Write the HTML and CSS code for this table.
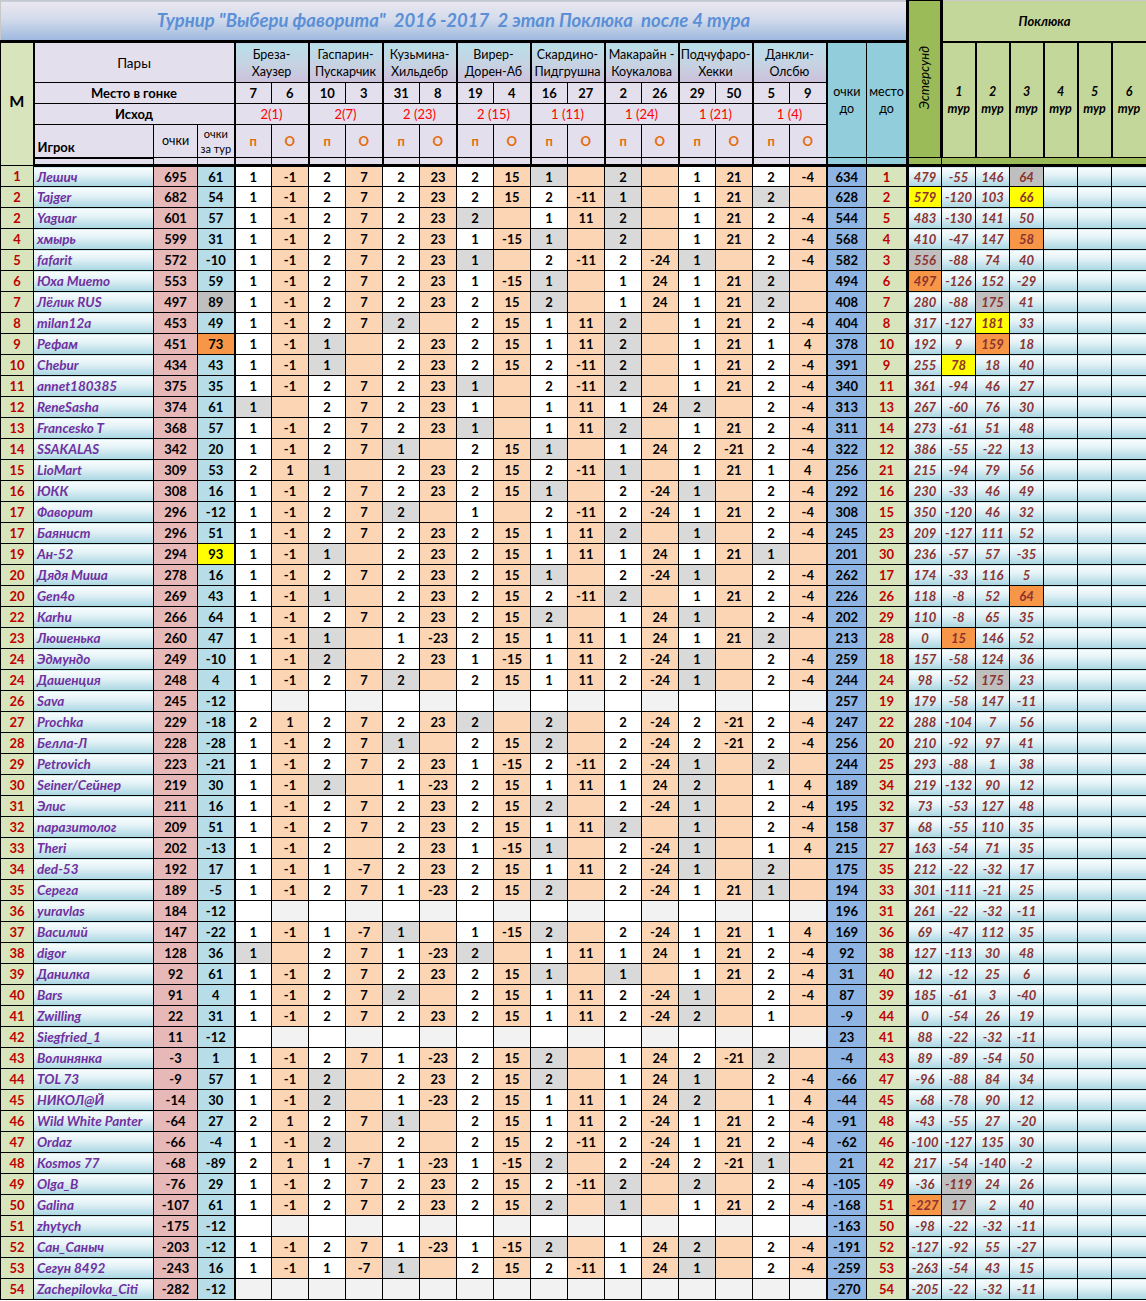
FILE: index.html
```html
<!DOCTYPE html>
<html lang="ru">
<head>
<meta charset="utf-8">
<title>Турнир "Выбери фаворита"</title>
<link rel="stylesheet" href="styles.css">
</head>
<body>
<table class="sheet">
<colgroup>
<col class="c-m"><col class="c-name"><col class="c-pts"><col class="c-tour">
<col class="c-p" span="16">
<col class="c-before"><col class="c-place"><col class="c-est"><col class="c-t" span="5"><col class="c-t6">
</colgroup>
<thead>
<tr class="h0">
<td colspan="22" class="title">Турнир "Выбери фаворита"  2016 -2017  2 этап Поклюка  после 4 тура</td>
<td rowspan="5" class="est"><span>Эстерсунд</span></td>
<td colspan="6" class="pok">Поклюка</td>
</tr>
<tr class="h1">
<td rowspan="5" class="mh">М</td>
<td colspan="3" class="lab pary">Пары</td>
<td colspan="2" class="pair l">Бреза-<br>Хаузер</td>
<td colspan="2" class="pair l">Гаспарин-<br>Пускарчик</td>
<td colspan="2" class="pair l">Кузьмина-<br>Хильдебр</td>
<td colspan="2" class="pair l">Вирер-<br>Дорен-Аб</td>
<td colspan="2" class="pair l">Скардино-<br>Пидгрушна</td>
<td colspan="2" class="pair l">Макарайн -<br>Коукалова</td>
<td colspan="2" class="pair l">Подчуфаро-<br>Хекки</td>
<td colspan="2" class="pair l">Данкли-<br>Олсбю</td>
<td rowspan="4" class="tq l">очки<br>до</td>
<td rowspan="4" class="tq r3">место<br>до</td>
<td rowspan="4" class="tr">1<br>тур</td>
<td rowspan="4" class="tr">2<br>тур</td>
<td rowspan="4" class="tr">3<br>тур</td>
<td rowspan="4" class="tr">4<br>тур</td>
<td rowspan="4" class="tr">5<br>тур</td>
<td rowspan="4" class="tr">6<br>тур</td>
</tr>
<tr class="h2">
<td colspan="3" class="lab">Место в гонке</td>
<td class="n l">7</td><td class="n">6</td>
<td class="n l">10</td><td class="n">3</td>
<td class="n l">31</td><td class="n">8</td>
<td class="n l">19</td><td class="n">4</td>
<td class="n l">16</td><td class="n">27</td>
<td class="n l">2</td><td class="n">26</td>
<td class="n l">29</td><td class="n">50</td>
<td class="n l">5</td><td class="n">9</td>
</tr>
<tr class="h3">
<td colspan="3" class="lab">Исход</td>
<td colspan="2" class="ish l">2(1)</td>
<td colspan="2" class="ish l">2(7)</td>
<td colspan="2" class="ish l">2 (23)</td>
<td colspan="2" class="ish l">2 (15)</td>
<td colspan="2" class="ish l">1 (11)</td>
<td colspan="2" class="ish l">1 (24)</td>
<td colspan="2" class="ish l">1 (21)</td>
<td colspan="2" class="ish l">1 (4)</td>
</tr>
<tr class="h4">
<td class="lab igrok">Игрок</td>
<td class="lab small">очки</td>
<td class="lab tiny">очки<br>за тур</td>
<td class="po l">п</td><td class="po">О</td>
<td class="po l">п</td><td class="po">О</td>
<td class="po l">п</td><td class="po">О</td>
<td class="po l">п</td><td class="po">О</td>
<td class="po l">п</td><td class="po">О</td>
<td class="po l">п</td><td class="po">О</td>
<td class="po l">п</td><td class="po">О</td>
<td class="po l">п</td><td class="po">О</td>
</tr>
<tr class="h5">
<td class="sp"></td><td class="sp"></td><td class="sp"></td>
<td class="sp l"></td><td class="sp"></td>
<td class="sp l"></td><td class="sp"></td>
<td class="sp l"></td><td class="sp"></td>
<td class="sp l"></td><td class="sp"></td>
<td class="sp l"></td><td class="sp"></td>
<td class="sp l"></td><td class="sp"></td>
<td class="sp l"></td><td class="sp"></td>
<td class="sp l"></td><td class="sp"></td>
<td class="sq l"></td><td class="sq r3"></td>
<td class="sg"></td><td colspan="6" class="sg"></td>
</tr>
</thead>
<tbody class="d">
<tr><td>1</td><td>Лешич</td><td>695</td><td>61</td><td>1</td><td>-1</td><td>2</td><td>7</td><td>2</td><td>23</td><td>2</td><td>15</td><td class="g">1</td><td></td><td class="g">2</td><td></td><td>1</td><td>21</td><td>2</td><td>-4</td><td>634</td><td>1</td><td>479</td><td>-55</td><td>146</td><td class="gr">64</td><td></td><td></td><td></td></tr>
<tr><td>2</td><td>Tajger</td><td>682</td><td>54</td><td>1</td><td>-1</td><td>2</td><td>7</td><td>2</td><td>23</td><td>2</td><td>15</td><td>2</td><td>-11</td><td class="g">1</td><td></td><td>1</td><td>21</td><td class="g">2</td><td></td><td>628</td><td>2</td><td class="y">579</td><td>-120</td><td>103</td><td class="y">66</td><td></td><td></td><td></td></tr>
<tr><td>2</td><td>Yaguar</td><td>601</td><td>57</td><td>1</td><td>-1</td><td>2</td><td>7</td><td>2</td><td>23</td><td class="g">2</td><td></td><td>1</td><td>11</td><td class="g">2</td><td></td><td>1</td><td>21</td><td>2</td><td>-4</td><td>544</td><td>5</td><td>483</td><td>-130</td><td>141</td><td>50</td><td></td><td></td><td></td></tr>
<tr><td>4</td><td>хмырь</td><td>599</td><td>31</td><td>1</td><td>-1</td><td>2</td><td>7</td><td>2</td><td>23</td><td>1</td><td>-15</td><td class="g">1</td><td></td><td class="g">2</td><td></td><td>1</td><td>21</td><td>2</td><td>-4</td><td>568</td><td>4</td><td>410</td><td>-47</td><td>147</td><td class="o">58</td><td></td><td></td><td></td></tr>
<tr><td>5</td><td>fafarit</td><td>572</td><td>-10</td><td>1</td><td>-1</td><td>2</td><td>7</td><td>2</td><td>23</td><td class="g">1</td><td></td><td>2</td><td>-11</td><td>2</td><td>-24</td><td class="g">1</td><td></td><td>2</td><td>-4</td><td>582</td><td>3</td><td class="gr">556</td><td>-88</td><td>74</td><td>40</td><td></td><td></td><td></td></tr>
<tr><td>6</td><td>Юха Мието</td><td>553</td><td>59</td><td>1</td><td>-1</td><td>2</td><td>7</td><td>2</td><td>23</td><td>1</td><td>-15</td><td class="g">1</td><td></td><td>1</td><td>24</td><td>1</td><td>21</td><td class="g">2</td><td></td><td>494</td><td>6</td><td class="o">497</td><td>-126</td><td>152</td><td>-29</td><td></td><td></td><td></td></tr>
<tr><td>7</td><td>Лёлик RUS</td><td>497</td><td class="gr">89</td><td>1</td><td>-1</td><td>2</td><td>7</td><td>2</td><td>23</td><td>2</td><td>15</td><td class="g">2</td><td></td><td>1</td><td>24</td><td>1</td><td>21</td><td class="g">2</td><td></td><td>408</td><td>7</td><td>280</td><td>-88</td><td class="gr">175</td><td>41</td><td></td><td></td><td></td></tr>
<tr><td>8</td><td>milan12a</td><td>453</td><td>49</td><td>1</td><td>-1</td><td>2</td><td>7</td><td class="g">2</td><td></td><td>2</td><td>15</td><td>1</td><td>11</td><td class="g">2</td><td></td><td>1</td><td>21</td><td>2</td><td>-4</td><td>404</td><td>8</td><td>317</td><td>-127</td><td class="y">181</td><td>33</td><td></td><td></td><td></td></tr>
<tr><td>9</td><td>Рефам</td><td>451</td><td class="o">73</td><td>1</td><td>-1</td><td class="g">1</td><td></td><td>2</td><td>23</td><td>2</td><td>15</td><td>1</td><td>11</td><td class="g">2</td><td></td><td>1</td><td>21</td><td>1</td><td>4</td><td>378</td><td>10</td><td>192</td><td>9</td><td class="o">159</td><td>18</td><td></td><td></td><td></td></tr>
<tr><td>10</td><td>Chebur</td><td>434</td><td>43</td><td>1</td><td>-1</td><td class="g">1</td><td></td><td>2</td><td>23</td><td>2</td><td>15</td><td>2</td><td>-11</td><td class="g">2</td><td></td><td>1</td><td>21</td><td>2</td><td>-4</td><td>391</td><td>9</td><td>255</td><td class="y">78</td><td>18</td><td>40</td><td></td><td></td><td></td></tr>
<tr><td>11</td><td>annet180385</td><td>375</td><td>35</td><td>1</td><td>-1</td><td>2</td><td>7</td><td>2</td><td>23</td><td class="g">1</td><td></td><td>2</td><td>-11</td><td class="g">2</td><td></td><td>1</td><td>21</td><td>2</td><td>-4</td><td>340</td><td>11</td><td>361</td><td>-94</td><td>46</td><td>27</td><td></td><td></td><td></td></tr>
<tr><td>12</td><td>ReneSasha</td><td>374</td><td>61</td><td class="g">1</td><td></td><td>2</td><td>7</td><td>2</td><td>23</td><td>1</td><td></td><td>1</td><td>11</td><td>1</td><td>24</td><td class="g">2</td><td></td><td>2</td><td>-4</td><td>313</td><td>13</td><td>267</td><td>-60</td><td>76</td><td>30</td><td></td><td></td><td></td></tr>
<tr><td>13</td><td>Francesko T</td><td>368</td><td>57</td><td>1</td><td>-1</td><td>2</td><td>7</td><td>2</td><td>23</td><td class="g">1</td><td></td><td>1</td><td>11</td><td class="g">2</td><td></td><td>1</td><td>21</td><td>2</td><td>-4</td><td>311</td><td>14</td><td>273</td><td>-61</td><td>51</td><td>48</td><td></td><td></td><td></td></tr>
<tr><td>14</td><td>SSAKALAS</td><td>342</td><td>20</td><td>1</td><td>-1</td><td>2</td><td>7</td><td class="g">1</td><td></td><td>2</td><td>15</td><td class="g">1</td><td></td><td>1</td><td>24</td><td>2</td><td>-21</td><td>2</td><td>-4</td><td>322</td><td>12</td><td>386</td><td>-55</td><td>-22</td><td>13</td><td></td><td></td><td></td></tr>
<tr><td>15</td><td>LioMart</td><td>309</td><td>53</td><td>2</td><td>1</td><td class="g">1</td><td></td><td>2</td><td>23</td><td>2</td><td>15</td><td>2</td><td>-11</td><td class="g">1</td><td></td><td>1</td><td>21</td><td>1</td><td>4</td><td>256</td><td>21</td><td>215</td><td>-94</td><td>79</td><td>56</td><td></td><td></td><td></td></tr>
<tr><td>16</td><td>ЮКК</td><td>308</td><td>16</td><td>1</td><td>-1</td><td>2</td><td>7</td><td>2</td><td>23</td><td>2</td><td>15</td><td class="g">1</td><td></td><td>2</td><td>-24</td><td class="g">1</td><td></td><td>2</td><td>-4</td><td>292</td><td>16</td><td>230</td><td>-33</td><td>46</td><td>49</td><td></td><td></td><td></td></tr>
<tr><td>17</td><td>Фаворит</td><td>296</td><td>-12</td><td>1</td><td>-1</td><td>2</td><td>7</td><td class="g">2</td><td></td><td>1</td><td></td><td>2</td><td>-11</td><td>2</td><td>-24</td><td>1</td><td>21</td><td>2</td><td>-4</td><td>308</td><td>15</td><td>350</td><td>-120</td><td>46</td><td>32</td><td></td><td></td><td></td></tr>
<tr><td>17</td><td>Баянист</td><td>296</td><td>51</td><td>1</td><td>-1</td><td>2</td><td>7</td><td>2</td><td>23</td><td>2</td><td>15</td><td>1</td><td>11</td><td class="g">2</td><td></td><td class="g">1</td><td></td><td>2</td><td>-4</td><td>245</td><td>23</td><td>209</td><td>-127</td><td>111</td><td>52</td><td></td><td></td><td></td></tr>
<tr><td>19</td><td>Ан-52</td><td>294</td><td class="y">93</td><td>1</td><td>-1</td><td class="g">1</td><td></td><td>2</td><td>23</td><td>2</td><td>15</td><td>1</td><td>11</td><td>1</td><td>24</td><td>1</td><td>21</td><td class="g">1</td><td></td><td>201</td><td>30</td><td>236</td><td>-57</td><td>57</td><td>-35</td><td></td><td></td><td></td></tr>
<tr><td>20</td><td>Дядя Миша</td><td>278</td><td>16</td><td>1</td><td>-1</td><td>2</td><td>7</td><td>2</td><td>23</td><td>2</td><td>15</td><td class="g">1</td><td></td><td>2</td><td>-24</td><td class="g">1</td><td></td><td>2</td><td>-4</td><td>262</td><td>17</td><td>174</td><td>-33</td><td>116</td><td>5</td><td></td><td></td><td></td></tr>
<tr><td>20</td><td>Gen4o</td><td>269</td><td>43</td><td>1</td><td>-1</td><td class="g">1</td><td></td><td>2</td><td>23</td><td>2</td><td>15</td><td>2</td><td>-11</td><td class="g">2</td><td></td><td>1</td><td>21</td><td>2</td><td>-4</td><td>226</td><td>26</td><td>118</td><td>-8</td><td>52</td><td class="o">64</td><td></td><td></td><td></td></tr>
<tr><td>22</td><td>Karhu</td><td>266</td><td>64</td><td>1</td><td>-1</td><td>2</td><td>7</td><td>2</td><td>23</td><td>2</td><td>15</td><td class="g">2</td><td></td><td>1</td><td>24</td><td class="g">1</td><td></td><td>2</td><td>-4</td><td>202</td><td>29</td><td>110</td><td>-8</td><td>65</td><td>35</td><td></td><td></td><td></td></tr>
<tr><td>23</td><td>Люшенька</td><td>260</td><td>47</td><td>1</td><td>-1</td><td class="g">1</td><td></td><td>1</td><td>-23</td><td>2</td><td>15</td><td>1</td><td>11</td><td>1</td><td>24</td><td>1</td><td>21</td><td class="g">2</td><td></td><td>213</td><td>28</td><td>0</td><td class="o">15</td><td>146</td><td>52</td><td></td><td></td><td></td></tr>
<tr><td>24</td><td>Эдмундо</td><td>249</td><td>-10</td><td>1</td><td>-1</td><td class="g">2</td><td></td><td>2</td><td>23</td><td>1</td><td>-15</td><td>1</td><td>11</td><td>2</td><td>-24</td><td class="g">1</td><td></td><td>2</td><td>-4</td><td>259</td><td>18</td><td>157</td><td>-58</td><td>124</td><td>36</td><td></td><td></td><td></td></tr>
<tr><td>24</td><td>Дашенция</td><td>248</td><td>4</td><td>1</td><td>-1</td><td>2</td><td>7</td><td class="g">2</td><td></td><td>2</td><td>15</td><td>1</td><td>11</td><td>2</td><td>-24</td><td class="g">1</td><td></td><td>2</td><td>-4</td><td>244</td><td>24</td><td>98</td><td>-52</td><td class="gr">175</td><td>23</td><td></td><td></td><td></td></tr>
<tr class="e"><td>26</td><td>Sava</td><td>245</td><td>-12</td><td></td><td></td><td></td><td></td><td></td><td></td><td></td><td></td><td></td><td></td><td></td><td></td><td></td><td></td><td></td><td></td><td>257</td><td>19</td><td>179</td><td>-58</td><td>147</td><td>-11</td><td></td><td></td><td></td></tr>
<tr><td>27</td><td>Prochka</td><td>229</td><td>-18</td><td>2</td><td>1</td><td>2</td><td>7</td><td>2</td><td>23</td><td class="g">2</td><td></td><td class="g">2</td><td></td><td>2</td><td>-24</td><td>2</td><td>-21</td><td>2</td><td>-4</td><td>247</td><td>22</td><td>288</td><td>-104</td><td>7</td><td>56</td><td></td><td></td><td></td></tr>
<tr><td>28</td><td>Белла-Л</td><td>228</td><td>-28</td><td>1</td><td>-1</td><td>2</td><td>7</td><td class="g">1</td><td></td><td>2</td><td>15</td><td class="g">2</td><td></td><td>2</td><td>-24</td><td>2</td><td>-21</td><td>2</td><td>-4</td><td>256</td><td>20</td><td>210</td><td>-92</td><td>97</td><td>41</td><td></td><td></td><td></td></tr>
<tr><td>29</td><td>Petrovich</td><td>223</td><td>-21</td><td>1</td><td>-1</td><td>2</td><td>7</td><td>2</td><td>23</td><td>1</td><td>-15</td><td>2</td><td>-11</td><td>2</td><td>-24</td><td class="g">1</td><td></td><td class="g">2</td><td></td><td>244</td><td>25</td><td>293</td><td>-88</td><td>1</td><td>38</td><td></td><td></td><td></td></tr>
<tr><td>30</td><td>Seiner/Сейнер</td><td>219</td><td>30</td><td>1</td><td>-1</td><td class="g">2</td><td></td><td>1</td><td>-23</td><td>2</td><td>15</td><td>1</td><td>11</td><td>1</td><td>24</td><td class="g">2</td><td></td><td>1</td><td>4</td><td>189</td><td>34</td><td>219</td><td>-132</td><td>90</td><td>12</td><td></td><td></td><td></td></tr>
<tr><td>31</td><td>Элис</td><td>211</td><td>16</td><td>1</td><td>-1</td><td>2</td><td>7</td><td>2</td><td>23</td><td>2</td><td>15</td><td class="g">2</td><td></td><td>2</td><td>-24</td><td class="g">1</td><td></td><td>2</td><td>-4</td><td>195</td><td>32</td><td>73</td><td>-53</td><td>127</td><td>48</td><td></td><td></td><td></td></tr>
<tr><td>32</td><td>паразитолог</td><td>209</td><td>51</td><td>1</td><td>-1</td><td>2</td><td>7</td><td>2</td><td>23</td><td>2</td><td>15</td><td>1</td><td>11</td><td class="g">2</td><td></td><td class="g">1</td><td></td><td>2</td><td>-4</td><td>158</td><td>37</td><td>68</td><td>-55</td><td>110</td><td>35</td><td></td><td></td><td></td></tr>
<tr><td>33</td><td>Theri</td><td>202</td><td>-13</td><td>1</td><td>-1</td><td>2</td><td></td><td>2</td><td>23</td><td>1</td><td>-15</td><td class="g">1</td><td></td><td>2</td><td>-24</td><td class="g">1</td><td></td><td>1</td><td>4</td><td>215</td><td>27</td><td>163</td><td>-54</td><td>71</td><td>35</td><td></td><td></td><td></td></tr>
<tr><td>34</td><td>ded-53</td><td>192</td><td>17</td><td>1</td><td>-1</td><td>1</td><td>-7</td><td>2</td><td>23</td><td>2</td><td>15</td><td>1</td><td>11</td><td>2</td><td>-24</td><td class="g">1</td><td></td><td class="g">2</td><td></td><td>175</td><td>35</td><td>212</td><td>-22</td><td>-32</td><td>17</td><td></td><td></td><td></td></tr>
<tr><td>35</td><td>Серега</td><td>189</td><td>-5</td><td>1</td><td>-1</td><td>2</td><td>7</td><td>1</td><td>-23</td><td>2</td><td>15</td><td class="g">2</td><td></td><td>2</td><td>-24</td><td>1</td><td>21</td><td class="g">1</td><td></td><td>194</td><td>33</td><td>301</td><td>-111</td><td>-21</td><td>25</td><td></td><td></td><td></td></tr>
<tr class="e"><td>36</td><td>yuravlas</td><td>184</td><td>-12</td><td></td><td></td><td></td><td></td><td></td><td></td><td></td><td></td><td></td><td></td><td></td><td></td><td></td><td></td><td></td><td></td><td>196</td><td>31</td><td>261</td><td>-22</td><td>-32</td><td>-11</td><td></td><td></td><td></td></tr>
<tr><td>37</td><td>Василий</td><td>147</td><td>-22</td><td>1</td><td>-1</td><td>1</td><td>-7</td><td class="g">1</td><td></td><td>1</td><td>-15</td><td class="g">2</td><td></td><td>2</td><td>-24</td><td>1</td><td>21</td><td>1</td><td>4</td><td>169</td><td>36</td><td>69</td><td>-47</td><td>112</td><td>35</td><td></td><td></td><td></td></tr>
<tr><td>38</td><td>digor</td><td>128</td><td>36</td><td class="g">1</td><td></td><td>2</td><td>7</td><td>1</td><td>-23</td><td class="g">2</td><td></td><td>1</td><td>11</td><td>1</td><td>24</td><td>1</td><td>21</td><td>2</td><td>-4</td><td>92</td><td>38</td><td>127</td><td>-113</td><td>30</td><td>48</td><td></td><td></td><td></td></tr>
<tr><td>39</td><td>Данилка</td><td>92</td><td>61</td><td>1</td><td>-1</td><td>2</td><td>7</td><td>2</td><td>23</td><td>2</td><td>15</td><td class="g">1</td><td></td><td class="g">1</td><td></td><td>1</td><td>21</td><td>2</td><td>-4</td><td>31</td><td>40</td><td>12</td><td>-12</td><td>25</td><td>6</td><td></td><td></td><td></td></tr>
<tr><td>40</td><td>Bars</td><td>91</td><td>4</td><td>1</td><td>-1</td><td>2</td><td>7</td><td class="g">2</td><td></td><td>2</td><td>15</td><td>1</td><td>11</td><td>2</td><td>-24</td><td class="g">1</td><td></td><td>2</td><td>-4</td><td>87</td><td>39</td><td>185</td><td>-61</td><td>3</td><td>-40</td><td></td><td></td><td></td></tr>
<tr><td>41</td><td>Zwilling</td><td>22</td><td>31</td><td>1</td><td>-1</td><td>2</td><td>7</td><td>2</td><td>23</td><td>2</td><td>15</td><td>1</td><td>11</td><td>2</td><td>-24</td><td class="g">2</td><td></td><td>1</td><td></td><td>-9</td><td>44</td><td>0</td><td>-54</td><td>26</td><td>19</td><td></td><td></td><td></td></tr>
<tr class="e"><td>42</td><td>Siegfried_1</td><td>11</td><td>-12</td><td></td><td></td><td></td><td></td><td></td><td></td><td></td><td></td><td></td><td></td><td></td><td></td><td></td><td></td><td></td><td></td><td>23</td><td>41</td><td>88</td><td>-22</td><td>-32</td><td>-11</td><td></td><td></td><td></td></tr>
<tr><td>43</td><td>Волинянка</td><td>-3</td><td>1</td><td>1</td><td>-1</td><td>2</td><td>7</td><td>1</td><td>-23</td><td>2</td><td>15</td><td class="g">2</td><td></td><td>1</td><td>24</td><td>2</td><td>-21</td><td class="g">2</td><td></td><td>-4</td><td>43</td><td>89</td><td>-89</td><td>-54</td><td>50</td><td></td><td></td><td></td></tr>
<tr><td>44</td><td>TOL 73</td><td>-9</td><td>57</td><td>1</td><td>-1</td><td class="g">2</td><td></td><td>2</td><td>23</td><td>2</td><td>15</td><td class="g">2</td><td></td><td>1</td><td>24</td><td class="g">1</td><td></td><td>2</td><td>-4</td><td>-66</td><td>47</td><td>-96</td><td>-88</td><td>84</td><td>34</td><td></td><td></td><td></td></tr>
<tr><td>45</td><td>НИКОЛ@Й</td><td>-14</td><td>30</td><td>1</td><td>-1</td><td class="g">2</td><td></td><td>1</td><td>-23</td><td>2</td><td>15</td><td>1</td><td>11</td><td>1</td><td>24</td><td class="g">2</td><td></td><td>1</td><td>4</td><td>-44</td><td>45</td><td>-68</td><td>-78</td><td>90</td><td>12</td><td></td><td></td><td></td></tr>
<tr><td>46</td><td>Wild White Panter</td><td>-64</td><td>27</td><td>2</td><td>1</td><td>2</td><td>7</td><td class="g">1</td><td></td><td>2</td><td>15</td><td>1</td><td>11</td><td>2</td><td>-24</td><td>1</td><td>21</td><td>2</td><td>-4</td><td>-91</td><td>48</td><td>-43</td><td>-55</td><td>27</td><td>-20</td><td></td><td></td><td></td></tr>
<tr><td>47</td><td>Ordaz</td><td>-66</td><td>-4</td><td>1</td><td>-1</td><td class="g">2</td><td></td><td>2</td><td></td><td>2</td><td>15</td><td>2</td><td>-11</td><td>2</td><td>-24</td><td>1</td><td>21</td><td>2</td><td>-4</td><td>-62</td><td>46</td><td>-100</td><td>-127</td><td>135</td><td>30</td><td></td><td></td><td></td></tr>
<tr><td>48</td><td>Kosmos 77</td><td>-68</td><td>-89</td><td>2</td><td>1</td><td>1</td><td>-7</td><td>1</td><td>-23</td><td>1</td><td>-15</td><td class="g">2</td><td></td><td>2</td><td>-24</td><td>2</td><td>-21</td><td class="g">1</td><td></td><td>21</td><td>42</td><td>217</td><td>-54</td><td>-140</td><td>-2</td><td></td><td></td><td></td></tr>
<tr><td>49</td><td>Olga_B</td><td>-76</td><td>29</td><td>1</td><td>-1</td><td>2</td><td>7</td><td>2</td><td>23</td><td>2</td><td>15</td><td>2</td><td>-11</td><td class="g">2</td><td></td><td class="g">2</td><td></td><td>2</td><td>-4</td><td>-105</td><td>49</td><td>-36</td><td class="gr">-119</td><td>24</td><td>26</td><td></td><td></td><td></td></tr>
<tr><td>50</td><td>Galina</td><td>-107</td><td>61</td><td>1</td><td>-1</td><td>2</td><td>7</td><td>2</td><td>23</td><td>2</td><td>15</td><td class="g">2</td><td></td><td class="g">1</td><td></td><td>1</td><td>21</td><td>2</td><td>-4</td><td>-168</td><td>51</td><td class="o">-227</td><td class="gr">17</td><td>2</td><td>40</td><td></td><td></td><td></td></tr>
<tr class="e"><td>51</td><td>zhytych</td><td>-175</td><td>-12</td><td></td><td></td><td></td><td></td><td></td><td></td><td></td><td></td><td></td><td></td><td></td><td></td><td></td><td></td><td></td><td></td><td>-163</td><td>50</td><td>-98</td><td>-22</td><td>-32</td><td>-11</td><td></td><td></td><td></td></tr>
<tr><td>52</td><td>Сан_Саныч</td><td>-203</td><td>-12</td><td>1</td><td>-1</td><td>2</td><td>7</td><td>1</td><td>-23</td><td>1</td><td>-15</td><td class="g">2</td><td></td><td>1</td><td>24</td><td class="g">2</td><td></td><td>2</td><td>-4</td><td>-191</td><td>52</td><td>-127</td><td>-92</td><td>55</td><td>-27</td><td></td><td></td><td></td></tr>
<tr><td>53</td><td>Сегун 8492</td><td>-243</td><td>16</td><td>1</td><td>-1</td><td>1</td><td>-7</td><td class="g">1</td><td></td><td>2</td><td>15</td><td>2</td><td>-11</td><td>1</td><td>24</td><td class="g">1</td><td></td><td>2</td><td>-4</td><td>-259</td><td>53</td><td>-263</td><td>-54</td><td>43</td><td>15</td><td></td><td></td><td></td></tr>
<tr class="e e2"><td>54</td><td>Zachepilovka_Citi</td><td>-282</td><td>-12</td><td></td><td></td><td></td><td></td><td></td><td></td><td></td><td></td><td></td><td></td><td></td><td></td><td></td><td></td><td></td><td></td><td>-270</td><td>54</td><td>-205</td><td>-22</td><td>-32</td><td>-11</td><td></td><td></td><td></td></tr>
</tbody>
</table>
</body>
</html>
```

FILE: styles.css
```css
* { box-sizing: border-box; }
html, body { margin: 0; padding: 0; background: #ffffff; }
body { font-family: Lato, "Noto Sans", "Liberation Sans", sans-serif; }

.sheet {
  border-collapse: collapse;
  table-layout: fixed;
  width: 1146px;
}
.c-m { width: 33px; }
.c-name { width: 120px; }
.c-pts { width: 44px; }
.c-tour { width: 37px; }
.c-p { width: 37px; }
.c-before { width: 40px; }
.c-place { width: 41px; }
.c-est { width: 34px; }
.c-t { width: 34px; }
.c-t6 { width: 35px; }

.sheet td {
  border: 1px solid #000;
  padding: 0;
  text-align: center;
  vertical-align: middle;
  font-size: 13px;
  font-weight: 700;
  color: #000;
  white-space: nowrap;
  overflow: hidden;
  line-height: 16px;
}

/* ---------- header ---------- */
.h0 { height: 41px; }
.h1 { height: 41px; }
.h2 { height: 21px; }
.h3 { height: 21px; }
.h4 { height: 33px; }
.h5 { height: 8px; }

.sheet .title {
  background: linear-gradient(to bottom, #ebe7f0 0%, #d3dbeb 45%, #9db8de 100%);
  color: #5b8fd6;
  font-style: italic;
  font-size: 18.5px;
  white-space: pre;
  border-top-color: #c8c8c8;
  border-left-color: #c8c8c8;
  border-bottom: 3px solid #000;
  border-right: 3px solid #000;
  padding-bottom: 2px;
}
.sheet .est {
  background: #9bbb59;
  border-right: 3px solid #000;
  border-left: 3px solid #000;
  font-weight: 400;
  font-style: italic;
  font-size: 13px;
}
.est span {
  display: inline-block;
  writing-mode: vertical-rl;
  transform: rotate(180deg);
  line-height: 15px;
}
.sheet .pok {
  background: #c4d79b;
  font-style: italic;
  font-size: 13px;
  border-bottom: 2px solid #000;
  border-top-color: #c8c8c8;
  border-right-color: #c8c8c8;
}
.sheet .mh {
  background: #d8e4bc;
  font-size: 16px;
  border-right: 2px solid #000;
  padding-bottom: 6px;
}
.sheet .lab {
  background: #e4dfec;
  font-size: 13px;
}
.sheet .pary { font-weight: 400; font-size: 13.5px; }
.sheet .igrok {
  text-align: left;
  vertical-align: bottom;
  padding: 0 0 2px 3px;
  border-bottom-width: 2px;
}
.sheet .small { font-weight: 400; font-size: 12.5px; }
.sheet .tiny { font-weight: 400; font-size: 11px; line-height: 15px; }
.sheet .pair {
  background: linear-gradient(to bottom, #b9dfe9 0%, #c6d2e2 55%, #ccc0da 100%);
  font-weight: 400;
  font-size: 12.5px;
  line-height: 17px;
}
.sheet .n { background: #e4dfec; font-size: 13px; }
.sheet .ish { background: #e4dfec; color: #ff0000; font-weight: 400; font-size: 13px; }
.sheet .po { background: #e4dfec; color: #e46c0a; font-size: 13px; }
.sheet .tq {
  background: #92cddc;
  font-weight: 400;
  font-size: 12.5px;
  line-height: 17px;
}
.sheet .tr {
  background: #c4d79b;
  font-style: italic;
  font-weight: 700;
  font-size: 12.5px;
  line-height: 17px;
  border-left: 2px solid #000;
  border-right: 2px solid #000;
}
.sheet .sp { background: #e4dfec; border-bottom: 3px solid #000; }
.sheet .sq { background: #92cddc; border-bottom: 3px solid #000; }
.sheet .sg { background: #9bbb59; border-bottom: 3px solid #000; }
.sheet .l { border-left: 2px solid #000; }
.sheet .r3 { border-right: 3px solid #000; }

/* ---------- data rows ---------- */
.d tr { height: 21px; }
.d td:nth-child(1) {
  background: #d8e4bc;
  color: #c00000;
}
.d td:nth-child(2) {
  text-align: left;
  padding-left: 3px;
  color: #7030a0;
  font-style: italic;
  font-size: 13.5px;
  background: linear-gradient(to bottom, #f9fdfe 0%, #e3f2f6 40%, #a9d6e2 100%);
}
.d td:nth-child(3) { background: #e6b8b7; }
.d td:nth-child(4) { background: #b7dee8; border-right: 2px solid #000; }
.d td:nth-child(n+5):nth-child(-n+20):nth-child(even) { background: #fcd5b4; }
.d .e td:nth-child(n+5):nth-child(-n+20):nth-child(even) { background: #f2f2f2; }
.d .e2 td:nth-child(n+5):nth-child(-n+20) { background: #f2f2f2; }
.d td:nth-child(20) { border-right: 2px solid #000; }
.d td:nth-child(21) { background: #8db4e2; }
.d td:nth-child(22) {
  background: #d8e4bc;
  color: #c00000;
  border-right: 3px solid #000;
}
.d td:nth-child(n+23) {
  font-style: italic;
  font-weight: 700;
  font-size: 13px;
  color: #8b3331;
  background: linear-gradient(to bottom, #f9fdfe 0%, #e3f2f6 40%, #a9d6e2 100%);
}
.d td.g { background: #d9d9d9; }
.d td.gr { background: #bfbfbf; }
.d td.y { background: #ffff00; }
.d td.o { background: #f79646; }
```
